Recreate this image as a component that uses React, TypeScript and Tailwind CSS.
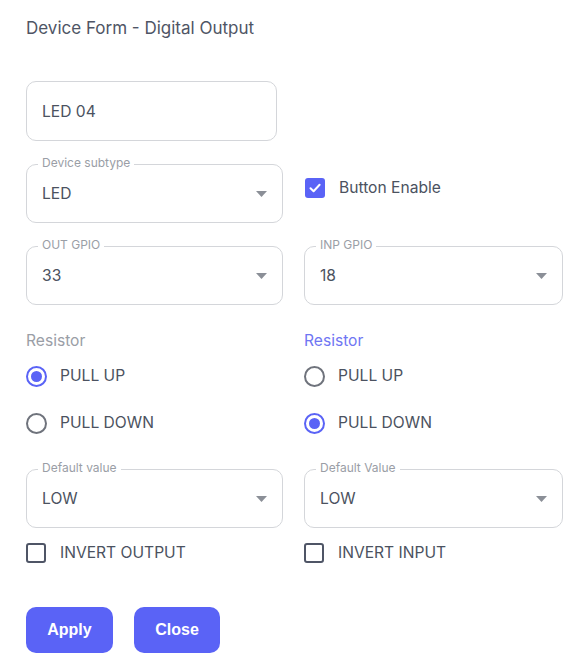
import React from "react";

const font = { fontFamily: "Inter, 'Noto Sans', sans-serif" };

function Arrow() {
  return (
    <svg width="11" height="6" viewBox="0 0 11 6" className="shrink-0">
      <path d="M0 0 L11 0 L5.5 6 Z" fill="#8b8f97" />
    </svg>
  );
}

function Select({ label, value }: { label: string; value: string }) {
  return (
    <div className="relative flex h-[59px] items-center justify-between rounded-[10px] border border-[#d4d6da] pl-[15px] pr-[15px]">
      <span className="absolute -top-[10px] left-[11px] bg-white px-[4px] text-[12px] leading-[16px] text-[#9a9ea6]">
        {label}
      </span>
      <span className="text-[15.6px] text-[#4b5260]">{value}</span>
      <Arrow />
    </div>
  );
}

function Radio({ checked, label }: { checked: boolean; label: string }) {
  return (
    <div className="flex h-[24px] items-center gap-[13px]">
      {checked ? (
        <span className="flex h-[21px] w-[21px] items-center justify-center rounded-full border-2 border-[#5a63f6]">
          <span className="h-[11px] w-[11px] rounded-full bg-[#5a63f6]" />
        </span>
      ) : (
        <span className="h-[21px] w-[21px] rounded-full border-2 border-[#6f737c]" />
      )}
      <span className="text-[15.6px] text-[#4b5260]">{label}</span>
    </div>
  );
}

function Check({ checked, label }: { checked: boolean; label: string }) {
  return (
    <div className="flex h-[20px] items-center gap-[14px]">
      {checked ? (
        <span className="flex h-[20px] w-[20px] items-center justify-center rounded-[3px] bg-[#5a63f6]">
          <svg width="14" height="14" viewBox="0 0 14 14">
            <path d="M2.5 7.2 L5.6 10.2 L11.6 3.8" stroke="white" strokeWidth="2" fill="none" strokeLinecap="round" strokeLinejoin="round" />
          </svg>
        </span>
      ) : (
        <span className="h-[20px] w-[20px] rounded-[3px] border-2 border-[#4f5566]" />
      )}
      <span className="text-[15.6px] text-[#4b5260]">{label}</span>
    </div>
  );
}

export default function App() {
  return (
    <div className="min-h-[672px] w-[588px] bg-white pl-[26px] pr-[25px]" style={font}>
      <div className="pt-[18px] text-[17px] leading-[20px] text-[#4f5565]">Device Form - Digital Output</div>

      <div className="mt-[43px] flex h-[60px] w-[251px] items-center rounded-[10px] border border-[#d4d6da] pl-[15px] pt-[2px] text-[15.6px] text-[#4b5260]">
        LED 04
      </div>

      <div className="mt-[23px] grid grid-cols-[257px_259px] gap-x-[21px]">
        <Select label="Device subtype" value="LED" />
        <div className="flex items-center pl-[1px] pb-[12px]">
          <Check checked label="Button Enable" />
        </div>

        <div className="mt-[23px]">
          <Select label="OUT GPIO" value="33" />
        </div>
        <div className="mt-[23px]">
          <Select label="INP GPIO" value="18" />
        </div>

        <div className="mt-[26px] text-[15.6px] leading-[20px] text-[#9a9ea6]">Resistor</div>
        <div className="mt-[26px] text-[15.6px] leading-[20px] text-[#6f76f3]">Resistor</div>

        <div className="mt-[13px] flex flex-col gap-[23px]">
          <Radio checked label="PULL UP" />
          <Radio checked={false} label="PULL DOWN" />
        </div>
        <div className="mt-[13px] flex flex-col gap-[23px]">
          <Radio checked={false} label="PULL UP" />
          <Radio checked label="PULL DOWN" />
        </div>

        <div className="mt-[34px]">
          <Select label="Default value" value="LOW" />
        </div>
        <div className="mt-[34px]">
          <Select label="Default Value" value="LOW" />
        </div>

        <div className="mt-[15px]">
          <Check checked={false} label="INVERT OUTPUT" />
        </div>
        <div className="mt-[15px]">
          <Check checked={false} label="INVERT INPUT" />
        </div>
      </div>

      <div className="mt-[44px] flex gap-[21px]" style={{ fontFamily: "'Liberation Sans', Arial, sans-serif" }}>
        <button className="h-[46px] w-[87px] rounded-[10px] bg-[#5a63f6] text-[16px] font-bold text-white">Apply</button>
        <button className="h-[46px] w-[86px] rounded-[10px] bg-[#5a63f6] text-[16px] font-bold text-white">Close</button>
      </div>
    </div>
  );
}
